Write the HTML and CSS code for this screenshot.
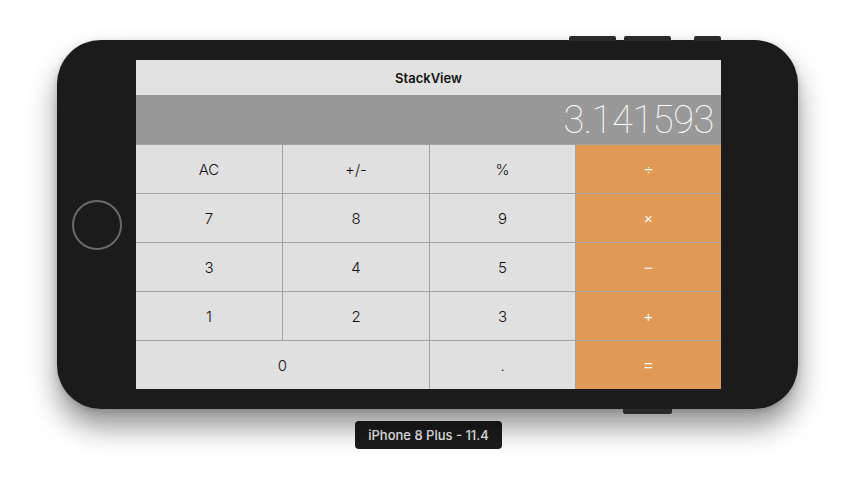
FILE: index.html
```html
<!DOCTYPE html>
<html>
<head>
<meta charset="utf-8">
<link rel="stylesheet" href="styles.css">
</head>
<body>
<div class="stage">
  <div class="phone">
    <div class="btn-top b1"></div>
    <div class="btn-top b2"></div>
    <div class="btn-top b3"></div>
    <div class="btn-bottom"></div>
    <div class="bezel-left"><div class="home"></div></div>
    <div class="screen">
      <div class="nav">StackView</div>
      <div class="display">3.141593</div>
      <div class="keys">
        <div class="key">AC</div>
        <div class="key">+/-</div>
        <div class="key">%</div>
        <div class="key op">÷</div>
        <div class="key">7</div>
        <div class="key">8</div>
        <div class="key">9</div>
        <div class="key op">×</div>
        <div class="key">3</div>
        <div class="key">4</div>
        <div class="key">5</div>
        <div class="key op">−</div>
        <div class="key">1</div>
        <div class="key">2</div>
        <div class="key">3</div>
        <div class="key op">+</div>
        <div class="key wide">0</div>
        <div class="key">.</div>
        <div class="key op">=</div>
      </div>
    </div>
    <div class="bezel-right"></div>
  </div>
  <div class="label">iPhone 8 Plus - 11.4</div>
</div>
</body>
</html>
```
FILE: styles.css
```css
html, body {
  margin: 0;
  padding: 0;
  background: #ffffff;
  font-family: "Liberation Sans", Arial, sans-serif;
}
.stage {
  width: 857px;
  height: 498px;
  display: flex;
  flex-direction: column;
  padding-top: 40px;
  box-sizing: border-box;
}
.phone {
  position: relative;
  margin-left: 57px;
  width: 741px;
  height: 369px;
  background: #1b1b1b;
  border-radius: 44px;
  display: flex;
  box-sizing: border-box;
  padding: 20px 0;
  box-shadow: 0 18px 28px rgba(0,0,0,0.42), 0 2px 6px rgba(0,0,0,0.15);
}
.btn-top {
  position: absolute;
  top: -4px;
  height: 5px;
  background: #2a2a2a;
  border-radius: 2px 2px 0 0;
}
.b1 { left: 512px; width: 47px; }
.b2 { left: 567px; width: 47px; }
.b3 { left: 637px; width: 27px; }
.btn-bottom {
  position: absolute;
  bottom: -5px;
  left: 566px;
  width: 49px;
  height: 5px;
  background: #2a2a2a;
  border-radius: 0 0 2px 2px;
}
.bezel-left {
  width: 79px;
  display: flex;
  align-items: center;
  justify-content: center;
}
.home {
  width: 46px;
  height: 46px;
  border: 2px solid #6a6a6a;
  border-radius: 50%;
  margin-left: 1px;
}
.bezel-right {
  width: 77px;
}
.screen {
  width: 585px;
  height: 329px;
  display: flex;
  flex-direction: column;
  background: #e1e1e1;
}
.nav {
  height: 35px;
  display: flex;
  align-items: center;
  justify-content: center;
  font-family: "Inter", sans-serif;
  font-size: 13px;
  font-weight: 600;
  color: #111;
  background: #e1e1e1;
  padding-top: 1px;
  box-sizing: border-box;
}
.display {
  height: 49px;
  background: #999999;
  color: #ffffff;
  font-family: "Roboto", sans-serif;
  font-weight: 100;
  font-size: 38px;
  display: flex;
  align-items: center;
  justify-content: flex-end;
  padding-right: 7px;
  letter-spacing: -0.4px;
}
.keys {
  flex: 1;
  display: grid;
  grid-template-columns: 146px 147px 146px 146px;
  grid-template-rows: repeat(5, 49px);
  background: #a3a3a3;
}
.key {
  background: #e0e0e0;
  display: flex;
  align-items: center;
  justify-content: center;
  font-family: "Inter", sans-serif;
  font-weight: 300;
  font-size: 15px;
  color: #111;
  border-top: 1px solid #a3a3a3;
  border-left: 1px solid #a3a3a3;
}
.key:nth-child(4n+1) { border-left: none; }
.wide { grid-column: span 2; border-left: none; }
.op {
  background: #e09a56;
  color: #fff;
  font-family: "Liberation Sans", sans-serif;
  font-weight: 400;
  font-size: 15px;
}
.label {
  align-self: flex-start;
  margin-left: 355px;
  margin-top: 12px;
  height: 28px;
  background: #1c1c1c;
  color: #f2f2f2;
  border-radius: 4px;
  font-family: "Inter", sans-serif;
  font-weight: 500;
  font-size: 13px;
  display: flex;
  align-items: center;
  box-sizing: border-box;
  width: 147px;
  justify-content: center;
}
```
